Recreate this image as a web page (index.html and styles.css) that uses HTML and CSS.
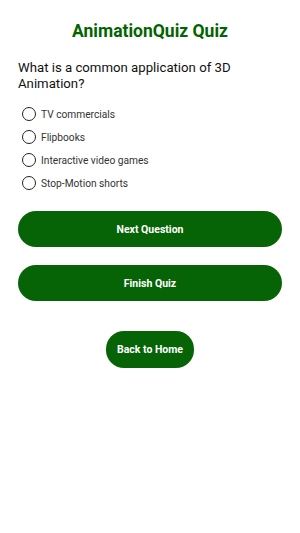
FILE: index.html
```html
<!DOCTYPE html>
<html lang="en">
  <head>
    <meta charset="UTF-8" />
    <meta name="viewport" content="width=device-width, initial-scale=1.0" />
    <title>AnimationQuiz Quiz</title>
    <link rel="stylesheet" href="styles.css">
  </head>
  <body>
    <div class="screen">
      <h1 class="title">AnimationQuiz Quiz</h1>
      <p class="question">What is a common application of 3D Animation?</p>

      <div class="options">
        <label class="option"><span class="radio"></span>TV commercials</label>
        <label class="option"><span class="radio"></span>Flipbooks</label>
        <label class="option"><span class="radio"></span>Interactive video games</label>
        <label class="option"><span class="radio"></span>Stop-Motion shorts</label>
      </div>

      <button class="btn wide">Next Question</button>
      <button class="btn wide">Finish Quiz</button>
      <button class="btn home">Back to Home</button>
    </div>
  </body>
</html>
```

FILE: styles.css
```css
body {
  margin: 0;
  background-color: #fff;
  font-family: Roboto, "Liberation Sans", sans-serif;
}
.screen {
  display: flex;
  flex-direction: column;
  padding: 0 18px;
}
.title {
  margin: 20px 0 0;
  text-align: center;
  font-size: 17.5px;
  font-weight: bold;
  line-height: 22px;
  color: #006400;
}
.question {
  margin: 18px 0 0;
  font-size: 13.2px;
  line-height: 16px;
  color: #111;
}
.options {
  display: flex;
  flex-direction: column;
  gap: 9px;
  margin-top: 15px;
  padding-left: 4px;
}
.option {
  display: flex;
  align-items: center;
  gap: 5px;
  height: 14px;
  font-size: 10.2px;
  color: #333;
}
.radio {
  box-sizing: border-box;
  width: 14px;
  height: 14px;
  border: 1.5px solid #222;
  border-radius: 50%;
}
.btn {
  border: none;
  border-radius: 18px;
  background-color: #066306;
  color: #fff;
  font-family: Roboto, "Liberation Sans", sans-serif;
  font-size: 10.5px;
  font-weight: bold;
  height: 36px;
}
.wide {
  margin-top: 18px;
}
.wide:first-of-type {
  margin-top: 21px;
}
.home {
  align-self: center;
  width: 88px;
  height: 37px;
  margin-top: 30px;
}
```
